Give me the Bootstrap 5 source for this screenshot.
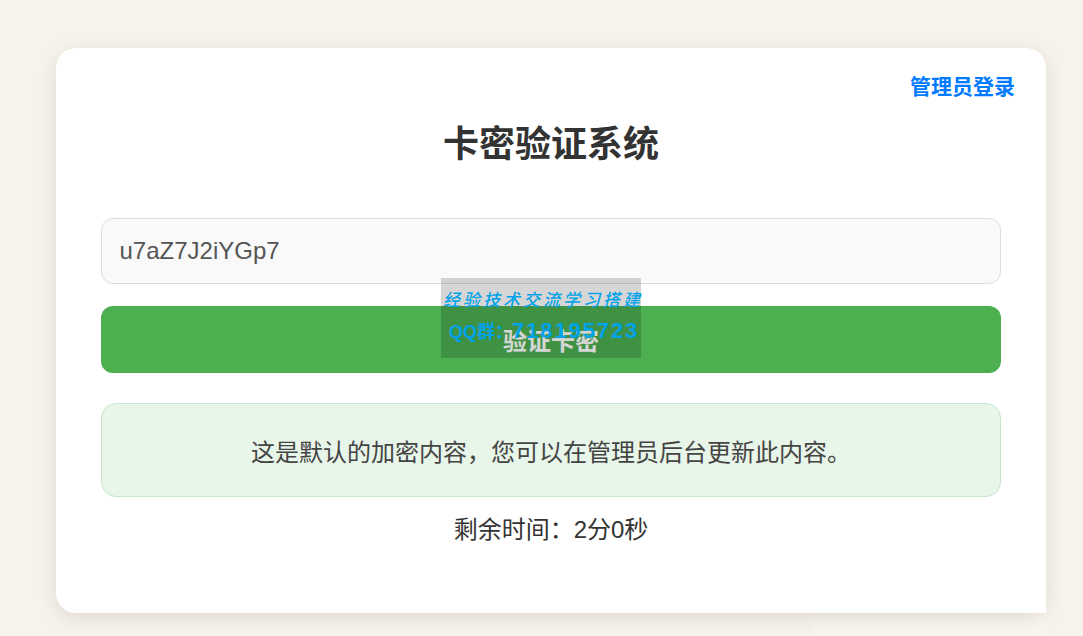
<!DOCTYPE html>
<html lang="zh-CN">
<head>
<meta charset="utf-8">
<title>卡密验证系统</title>
<link href="https://cdn.jsdelivr.net/npm/bootstrap@5.3.0/dist/css/bootstrap.min.css" rel="stylesheet">
<style>
html,body{height:636px;overflow:hidden}
body{background:#f7f3eb;font-family:"Liberation Sans","Noto Sans CJK SC",sans-serif;color:#333;padding:48px 37px 0 56px;position:relative}
.panel{height:565px;background:#fff;border-radius:20px;box-shadow:0 5px 20px rgba(0,0,0,.1);padding:0 45px;position:relative}
.admin-link{position:absolute;top:25px;right:31px;font-size:21px;font-weight:700;line-height:28px;color:#007bff;text-decoration:none}
.heading{font-size:36px;font-weight:700;line-height:44px;color:#333;margin:0;padding-top:75px;text-align:center}
.key-field{height:66px;margin-top:51px;background:#f9f9f9;border:1px solid #ddd;border-radius:12px;padding:0 17.5px;font-size:24px;color:#555;box-shadow:none}
.key-field:focus{background:#f9f9f9;border-color:#ddd;box-shadow:none;color:#555}
.verify-btn{height:67px;margin-top:22px;padding-top:10px;background:#4caf50;border:0;border-radius:12px;color:#fff;font-size:24px;font-weight:700}
.verify-btn:hover{background:#4caf50;color:#fff}
.result-box{height:94px;margin-top:30px;padding-top:5px;background:#e8f5e9;border:1px solid #c8e6c9;border-radius:15px;font-size:24px;color:#444}
.timer{margin-top:16px;font-size:24px;line-height:34px;color:#333}
.stamp{position:absolute;left:441px;top:278px;width:200px;height:80px;background:rgba(0,0,0,.16);color:#00a2e8;z-index:5}
.stamp-top{font-family:"Noto Sans CJK SC",sans-serif;font-style:italic;font-weight:500;font-size:17px;line-height:20px;letter-spacing:3px;margin-top:11px;margin-left:2px;white-space:nowrap}
.stamp-bot{font-size:18px;font-weight:700;line-height:24px;margin-top:10px;margin-left:8px;text-align:left;white-space:nowrap}
.stamp-num{font-size:22px;letter-spacing:1.9px;margin-left:-1px}
.corner-fade{position:absolute;left:813px;top:545px;width:233px;height:91px;background:linear-gradient(180deg,rgba(255,255,255,0) 0,rgba(255,255,255,0) 74%,rgba(255,255,255,.22) 100%);z-index:4}
.corner-mask{position:absolute;left:1020px;top:587px;width:26px;height:26px;background:#fff;z-index:3}
</style>
</head>
<body>
<main class="panel">
<a class="admin-link" href="#">管理员登录</a>
<h1 class="heading">卡密验证系统</h1>
<form class="d-flex flex-column">
<input class="form-control key-field" type="text" value="u7aZ7J2iYGp7">
<button class="btn w-100 verify-btn" type="button">验证卡密</button>
<div class="result-box d-flex align-items-center justify-content-center">这是默认的加密内容，您可以在管理员后台更新此内容。</div>
<div class="timer text-center">剩余时间：2分0秒</div>
</form>
</main>
<div class="corner-mask"></div>
<div class="corner-fade"></div>
<div class="stamp">
<div class="stamp-top text-center">经验技术交流学习搭建</div>
<div class="stamp-bot">QQ群：<span class="stamp-num">718195723</span></div>
</div>
<script src="https://cdn.jsdelivr.net/npm/bootstrap@5.3.0/dist/js/bootstrap.bundle.min.js"></script>
</body>
</html>
